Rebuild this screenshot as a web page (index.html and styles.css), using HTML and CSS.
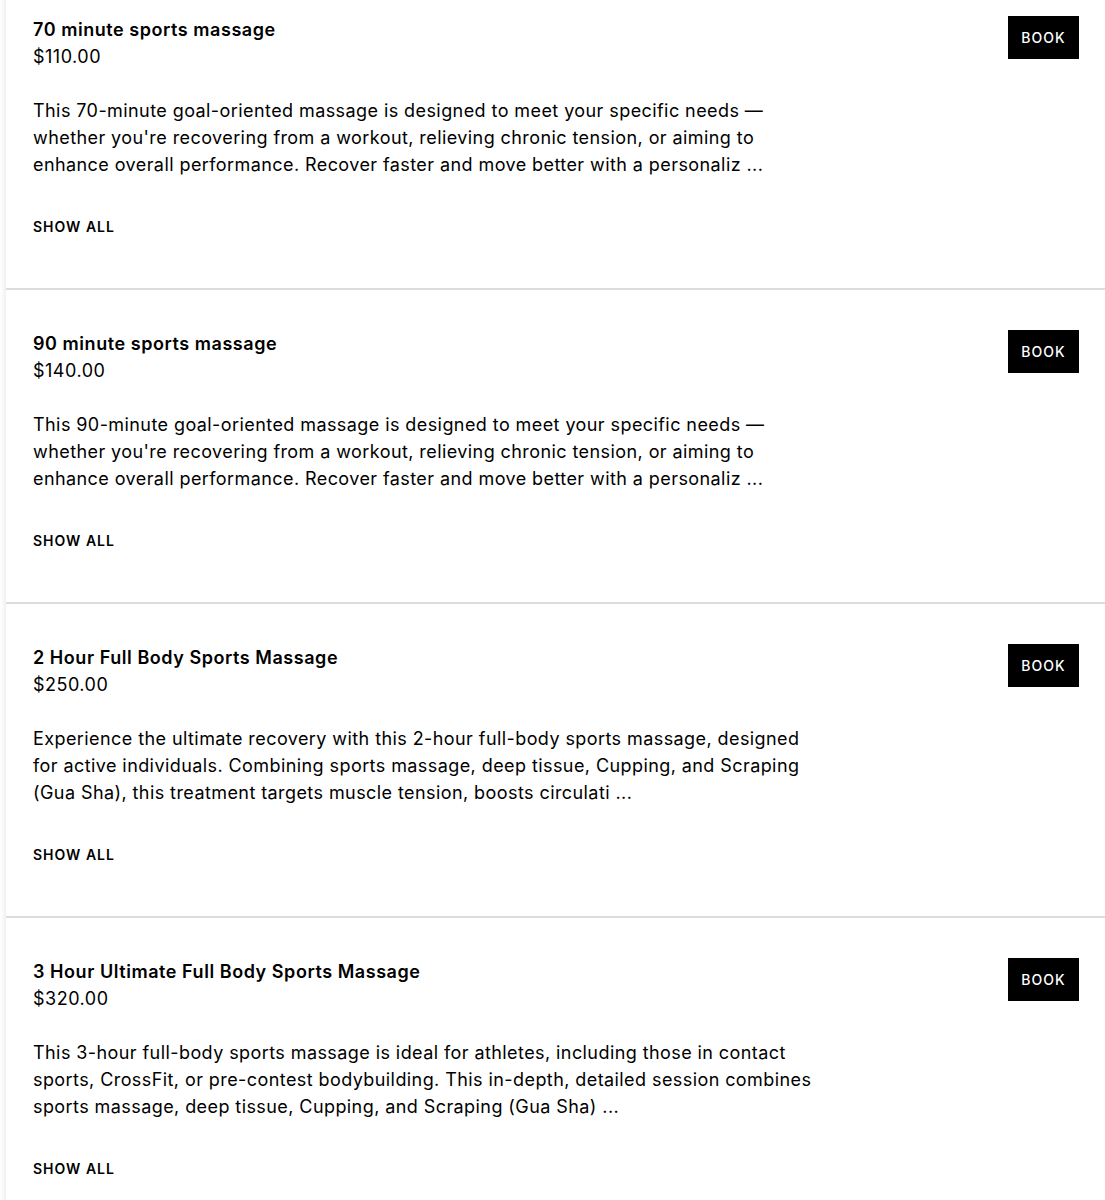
FILE: index.html
```html
<!DOCTYPE html>
<html lang="en">
<head>
<meta charset="utf-8">
<title>Services</title>
<link rel="stylesheet" href="styles.css">
</head>
<body>
<div class="page">
  <ul class="services">
    <li class="service">
      <div class="service-main">
        <h3 class="service-title">70 minute sports massage</h3>
        <div class="service-price">$110.00</div>
        <p class="service-desc">This 70-minute goal-oriented massage is designed to meet your specific needs —<br>whether you're recovering from a workout, relieving chronic tension, or aiming to<br>enhance overall performance. Recover faster and move better with a personaliz ...</p>
        <a class="show-all" href="#">Show all</a>
      </div>
      <button class="book">BOOK</button>
    </li>
    <li class="service">
      <div class="service-main">
        <h3 class="service-title">90 minute sports massage</h3>
        <div class="service-price">$140.00</div>
        <p class="service-desc">This 90-minute goal-oriented massage is designed to meet your specific needs —<br>whether you're recovering from a workout, relieving chronic tension, or aiming to<br>enhance overall performance. Recover faster and move better with a personaliz ...</p>
        <a class="show-all" href="#">Show all</a>
      </div>
      <button class="book">BOOK</button>
    </li>
    <li class="service">
      <div class="service-main">
        <h3 class="service-title">2 Hour Full Body Sports Massage</h3>
        <div class="service-price">$250.00</div>
        <p class="service-desc">Experience the ultimate recovery with this 2-hour full-body sports massage, designed<br>for active individuals. Combining sports massage, deep tissue, Cupping, and Scraping<br>(Gua Sha), this treatment targets muscle tension, boosts circulati ...</p>
        <a class="show-all" href="#">Show all</a>
      </div>
      <button class="book">BOOK</button>
    </li>
    <li class="service">
      <div class="service-main">
        <h3 class="service-title">3 Hour Ultimate Full Body Sports Massage</h3>
        <div class="service-price">$320.00</div>
        <p class="service-desc">This 3-hour full-body sports massage is ideal for athletes, including those in contact<br>sports, CrossFit, or pre-contest bodybuilding. This in-depth, detailed session combines<br>sports massage, deep tissue, Cupping, and Scraping (Gua Sha) ...</p>
        <a class="show-all" href="#">Show all</a>
      </div>
      <button class="book">BOOK</button>
    </li>
  </ul>
</div>
</body>
</html>
```
FILE: styles.css
```css
html, body {
  margin: 0;
  padding: 0;
  background: #fff;
}
body {
  font-family: "Inter", "Liberation Sans", sans-serif;
  color: #000;
  overflow: hidden;
}
.page {
  margin-left: 6px;
  margin-top: -24px;
  box-shadow: -3px 0 4px rgba(0, 0, 0, 0.06);
}
.services {
  list-style: none;
  margin: 0;
  padding: 0;
}
.service {
  display: flex;
  justify-content: space-between;
  align-items: flex-start;
  padding: 40px 26px 0 27px;
  height: 272px;
  border-bottom: 2px solid #dcdcdc;
}
.service-main {
  display: flex;
  flex-direction: column;
  align-items: flex-start;
}
.service-title {
  margin: 0;
  font-size: 18px;
  font-weight: 600;
  line-height: 27px;
  letter-spacing: 0.55px;
}
.service-price {
  font-size: 18px;
  line-height: 27px;
  letter-spacing: 0.5px;
}
.service-desc {
  margin: 27px 0 0;
  font-size: 18px;
  line-height: 27px;
  letter-spacing: 0.42px;
  white-space: nowrap;
}
.show-all {
  margin-top: 40px;
  font-size: 14px;
  line-height: 18px;
  font-weight: 600;
  letter-spacing: 1px;
  text-transform: uppercase;
  color: #000;
  text-decoration: none;
}
.book {
  width: 71px;
  height: 43px;
  background: #000;
  color: #fff;
  border: 0;
  padding: 0;
  font-family: inherit;
  font-size: 14px;
  font-weight: 500;
  letter-spacing: 1px;
  cursor: pointer;
}
```
